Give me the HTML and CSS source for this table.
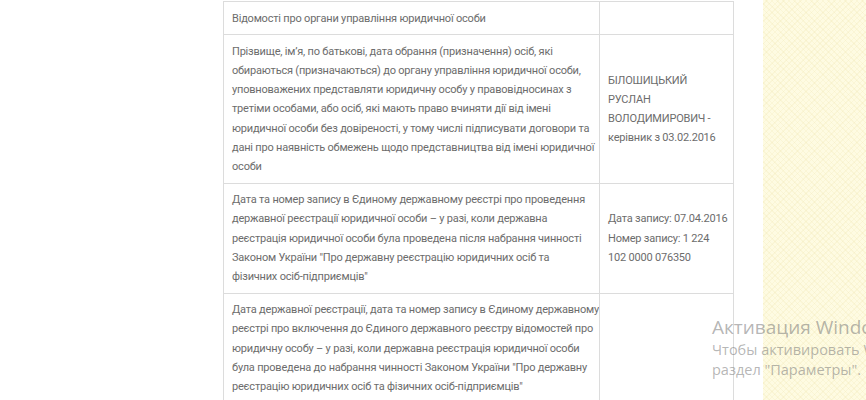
FILE: index.html
```html
<!DOCTYPE html>
<html lang="uk">
<head>
<meta charset="utf-8">
<title>Відомості</title>
<link rel="stylesheet" href="styles.css">
</head>
<body>
<div class="page">
  <main class="content">
    <table class="info">
      <tr>
        <td class="label">Відомості про органи управління юридичної особи</td>
        <td class="value"></td>
      </tr>
      <tr>
        <td class="label">Прізвище, ім’я, по батькові, дата обрання (призначення) осіб, які<br>обираються (призначаються) до органу управління юридичної особи,<br>уповноважених представляти юридичну особу у правовідносинах з<br>третіми особами, або осіб, які мають право вчиняти дії від імені<br>юридичної особи без довіреності, у тому числі підписувати договори та<br>дані про наявність обмежень щодо представництва від імені юридичної<br>особи</td>
        <td class="value">БІЛОШИЦЬКИЙ<br>РУСЛАН<br>ВОЛОДИМИРОВИЧ -<br>керівник з 03.02.2016</td>
      </tr>
      <tr>
        <td class="label">Дата та номер запису в Єдиному державному реєстрі про проведення<br>державної реєстрації юридичної особи – у разі, коли державна<br>реєстрація юридичної особи була проведена після набрання чинності<br>Законом України "Про державну реєстрацію юридичних осіб та<br>фізичних осіб-підприємців"</td>
        <td class="value">Дата запису: 07.04.2016<br>Номер запису: 1 224<br>102 0000 076350</td>
      </tr>
      <tr>
        <td class="label">Дата державної реєстрації, дата та номер запису в Єдиному державному<br>реєстрі про включення до Єдиного державного реєстру відомостей про<br>юридичну особу – у разі, коли державна реєстрація юридичної особи<br>була проведена до набрання чинності Законом України "Про державну<br>реєстрацію юридичних осіб та фізичних осіб-підприємців"</td>
        <td class="value"></td>
      </tr>
    </table>
  </main>
  <aside class="pattern"></aside>
</div>
<div class="activation">
  <div class="act-title">Активация Windows</div>
  <div class="act-text">Чтобы активировать Windows, перейдите в<br>раздел "Параметры".</div>
</div>
</body>
</html>
```
FILE: styles.css
```css
html, body {
  margin: 0;
  padding: 0;
  background: #ffffff;
  overflow: hidden;
}

.page {
  display: flex;
  height: 400px;
  width: 866px;
}

.content {
  flex: 0 0 763px;
  padding: 1px 0 0 223px;
  box-sizing: border-box;
}

.info {
  border-collapse: collapse;
  table-layout: fixed;
  width: 511px;
  font-family: Roboto, "Liberation Sans", sans-serif;
  font-size: 11px;
  letter-spacing: -0.2px;
  line-height: 19.2px;
  color: #6c6c6c;
}

.info td {
  border: 1px solid #dcdcdc;
  padding: 6.5px 8px;
  vertical-align: middle;
  white-space: nowrap;
  overflow: hidden;
}

.info td.label {
  width: 359px;
}

.info td.value {
  width: 117px;
}

.pattern {
  flex: 1;
  background-color: #fefbe2;
  background-image:
    repeating-linear-gradient(45deg, rgba(236, 224, 165, 0.2) 0 1px, transparent 1px 4px),
    repeating-linear-gradient(-45deg, rgba(236, 224, 165, 0.2) 0 1px, transparent 1px 4px);
}

.activation {
  position: absolute;
  left: 712px;
  top: 314px;
  font-family: "Open Sans", "Noto Sans", sans-serif;
  color: rgba(120, 120, 120, 0.55);
  white-space: nowrap;
}

.act-title {
  font-size: 19px;
  line-height: 26px;
}

.act-text {
  font-size: 14.5px;
  line-height: 20px;
}
```
